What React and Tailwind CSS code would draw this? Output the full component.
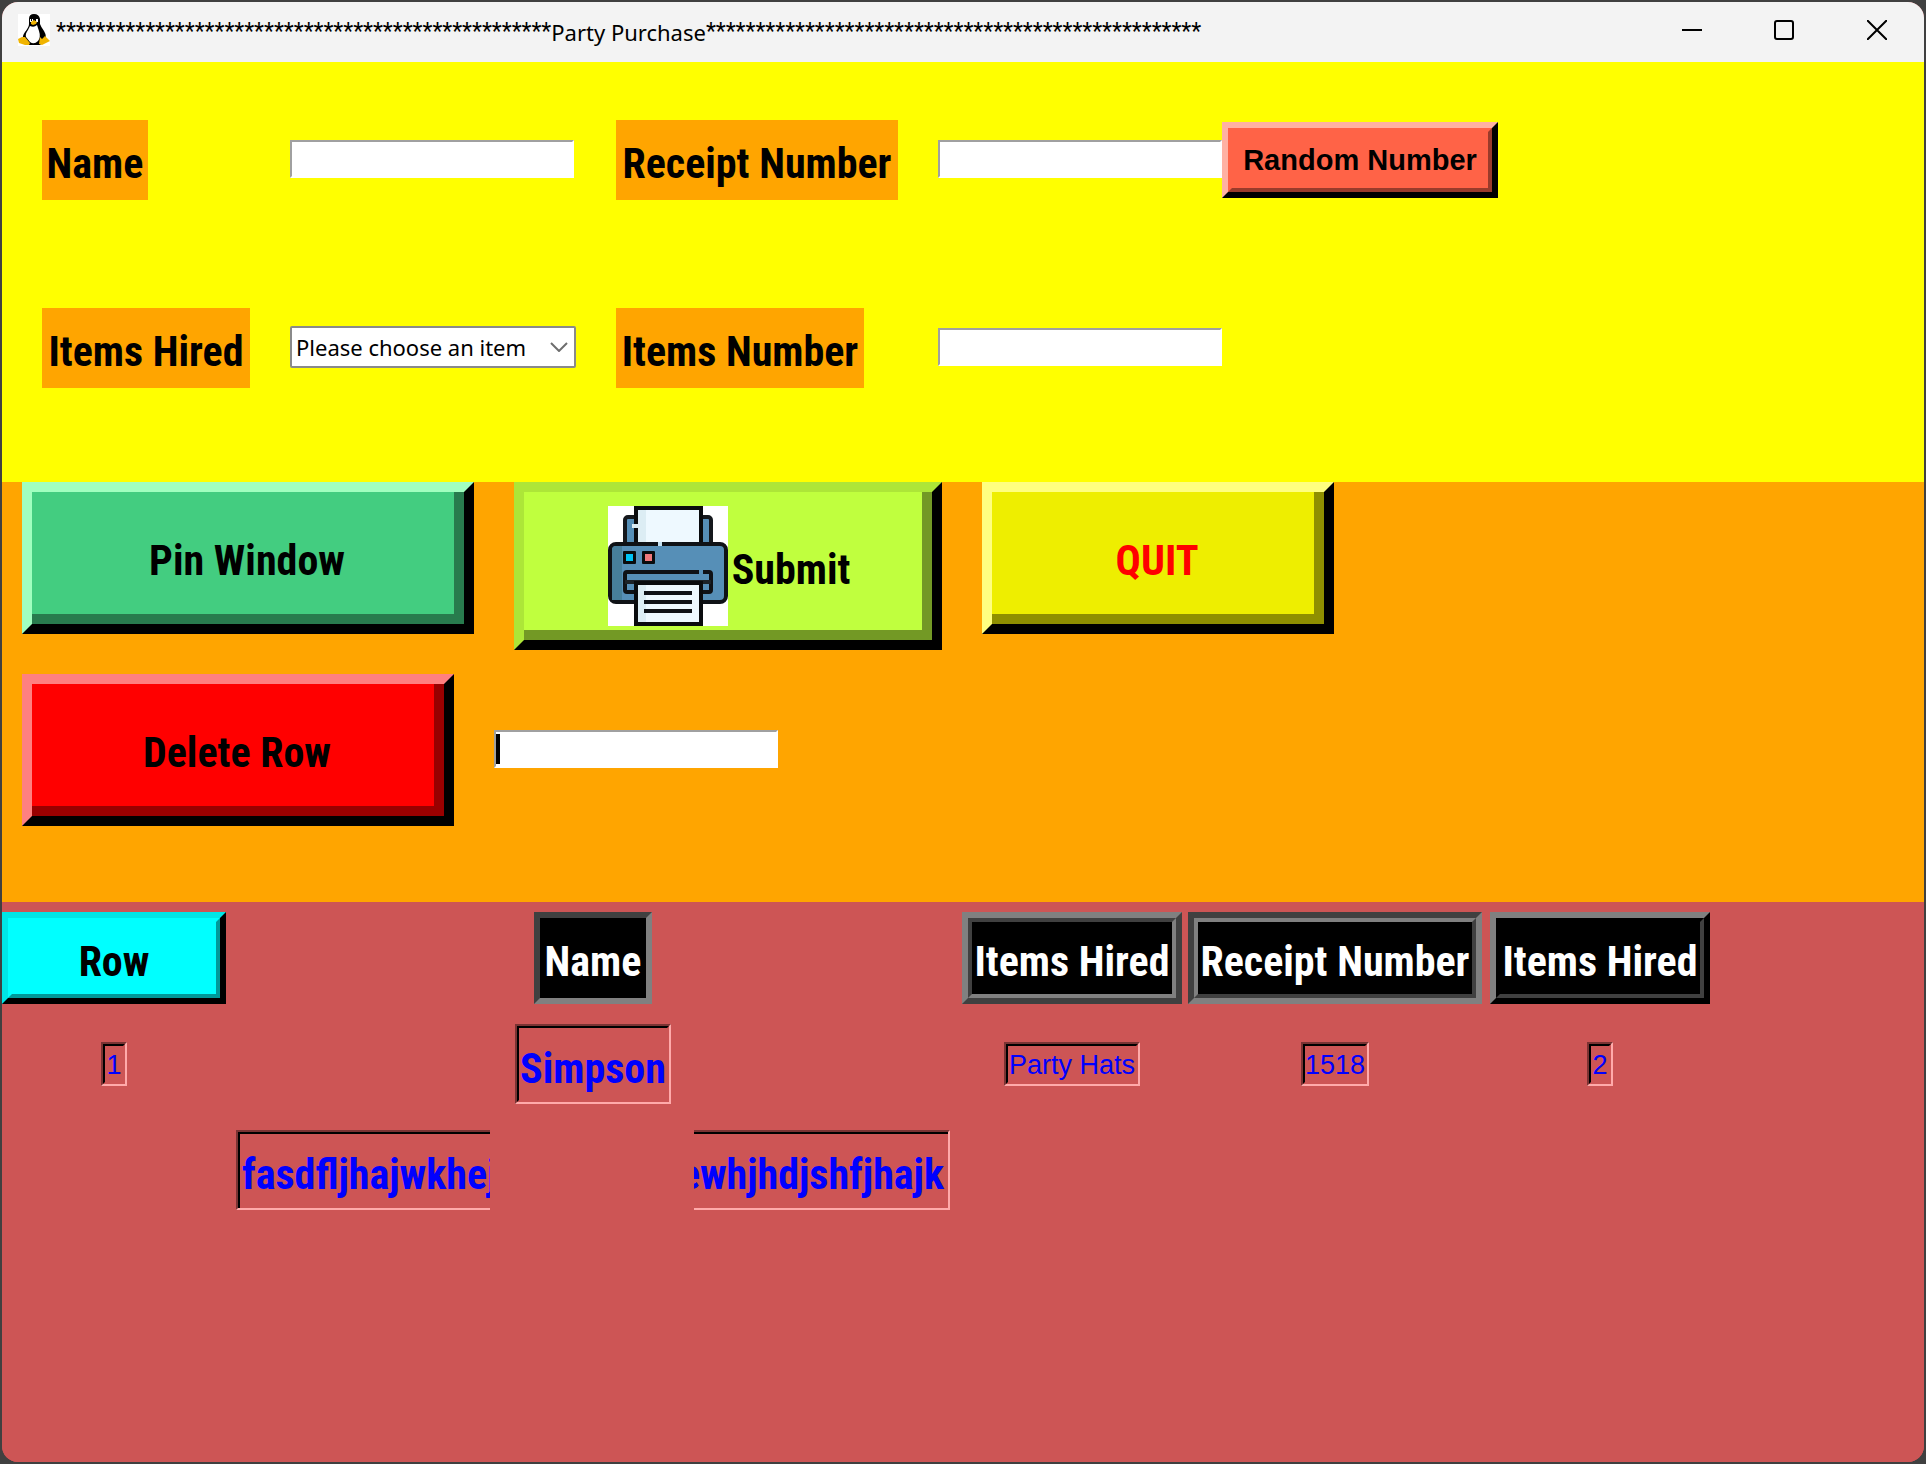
import React from "react";

const DISPLAY = "font-['Roboto_Condensed','Roboto',sans-serif] font-bold";

const STARS = "*".repeat(50);

function Tux() {
  return (
    <svg width="32" height="32" viewBox="0 0 32 32" aria-hidden="true">
      <rect width="32" height="32" fill="#fff" />
      <path d="M11 5Q11 0 16 0Q21 0 22 5V10Q23 13 26 17Q29 22 27 27L22 31H10L5 26Q4 22 7 18Q11 13 11 10Z" fill="#000" />
      <path d="M12 12Q16 14 19 11Q20 14 21 17Q23 23 20 27Q16 31 12 28L8 23Q7 20 10 16Z" fill="#fff" />
      <path d="M12 5h3v3h-3zM17 5h3v3h-3z" fill="#fff" />
      <path d="M13 5h1v2h-1zM17 5h1v2h-1z" fill="#000" />
      <path d="M13 8L16 6L19 8L18 10L15 11L13 10Z" fill="#f0b400" />
      <path d="M0 25L4 23L7 23L12 29L11 31L7 31L1 29Z" fill="#f0b400" />
      <path d="M22 23L24 25L27 22L32 27L28 29L24 31L21 30Z" fill="#f0b400" />
    </svg>
  );
}

function Printer() {
  return (
    <svg width="120" height="120" viewBox="0 0 120 120" className="shrink-0" aria-hidden="true">
      <rect width="120" height="120" fill="#fff" />
      <rect x="17" y="11" width="86" height="34" rx="3" fill="#568fb7" stroke="#15181c" strokeWidth="4" />
      <rect x="28" y="2" width="65" height="40" fill="#eef9ff" stroke="#0a0c0e" strokeWidth="4" />
      <rect x="30" y="4" width="8" height="34" fill="#dcedf4" />
      <rect x="24" y="18" width="7" height="4" fill="#dcedf4" />
      <rect x="2" y="38" width="116" height="58" rx="6" fill="#568fb7" stroke="#0f1216" strokeWidth="4" />
      <path d="M8 40H14V94H4V44Q4 40 8 40Z" fill="#477f9b" />
      <rect x="50" y="36" width="4" height="4" fill="#c6e2f2" />
      <rect x="15" y="45" width="13" height="13" rx="1" fill="#0a0c0e" />
      <rect x="18" y="48" width="7" height="7" fill="#00c3f5" />
      <rect x="34" y="45" width="13" height="13" rx="1" fill="#0a0c0e" />
      <rect x="37" y="48" width="7" height="7" fill="#f0787c" />
      <rect x="17" y="66" width="86" height="20" rx="2" fill="#568fb7" stroke="#0f1216" strokeWidth="4" />
      <rect x="91" y="64" width="4" height="4" fill="#568fb7" />
      <path d="M17 76H103" stroke="#1c2227" strokeWidth="4" />
      <rect x="28" y="77" width="65" height="41" fill="#eef9ff" stroke="#0a0c0e" strokeWidth="4" />
      <rect x="30" y="79" width="8" height="37" fill="#dcedf4" />
      <path d="M36 87H84M36 96H84M36 105H84" stroke="#0f1216" strokeWidth="4" />
    </svg>
  );
}

function FieldLabel({ htmlFor, width, children }) {
  return (
    <label htmlFor={htmlFor} className={`${DISPLAY} ${width} flex h-20 items-center justify-center whitespace-nowrap bg-[#ffa500] pt-2 text-[42px] leading-none text-black`}>
      {children}
    </label>
  );
}

function Entry({ id, ...rest }) {
  return (
    <input
      id={id}
      type="text"
      className="mb-0.5 block h-[38px] w-[284px] border-2 border-t-[#a0a0a0] border-l-[#a0a0a0] border-r-white border-b-white bg-white px-1 font-['Liberation_Sans',sans-serif] text-2xl outline-none"
      {...rest}
    />
  );
}

function BigButton({ outer, inner, children }) {
  return (
    <button type="button" className={`${DISPLAY} ${outer} block border-10 border-r-black border-b-black text-[42px] leading-none`}>
      <span className={`${inner} flex h-full items-center justify-center whitespace-nowrap border-r-10 border-b-10`}>{children}</span>
    </button>
  );
}

function HeadCell({ outer, inner, children }) {
  return (
    <th className="p-0 align-middle font-normal">
      <div className={`${DISPLAY} ${outer} mx-auto h-[92px] border-6 bg-black text-[42px] leading-none text-white`}>
        <div className={`${inner} flex h-full items-center justify-center whitespace-nowrap border-4 pt-2`}>{children}</div>
      </div>
    </th>
  );
}

function Sunken({ size, children }) {
  return (
    <div className={`${size} mx-auto border-2 border-t-[#7b3333] border-l-[#7b3333] border-r-[#ffaaaa] border-b-[#ffaaaa] text-[#0000ff]`}>
      <div className="flex h-full items-center justify-center whitespace-nowrap border-2 border-t-black border-l-black border-r-[#cd5555] border-b-[#cd5555] pt-0.5">
        {children}
      </div>
    </div>
  );
}

const SMALL = "h-11 font-['Liberation_Sans',sans-serif] text-[27px] leading-none";

export default function App() {
  return (
    <div className="min-h-screen bg-[#404040] p-0.5">
      <div className="flex min-h-[calc(100vh-4px)] flex-col overflow-hidden rounded-2xl bg-[#cd5555]">
        <header className="flex h-[60px] shrink-0 items-center justify-between bg-[#f3f3f3] pb-1 text-black">
          <div className="flex items-center pl-4">
            <Tux />
            <h1 className="ml-1.5 flex h-8 items-center whitespace-nowrap pt-1 font-['Noto_Sans',sans-serif] text-[22px] font-normal leading-8">
              <span className="font-['Roboto',sans-serif] text-[23px]">{STARS}</span>
              <span>Party Purchase</span>
              <span className="font-['Roboto',sans-serif] text-[23px]">{STARS}</span>
            </h1>
          </div>
          <div className="flex h-full">
            <button type="button" aria-label="Minimize" className="flex h-full w-[92px] items-center justify-center">
              <svg width="20" height="20" viewBox="0 0 20 20"><path d="M0 10H20" stroke="#000" strokeWidth="2" /></svg>
            </button>
            <button type="button" aria-label="Maximize" className="flex h-full w-[92px] items-center justify-center">
              <svg width="20" height="20" viewBox="0 0 20 20"><rect x="1" y="1" width="18" height="18" rx="2" fill="none" stroke="#000" strokeWidth="2" /></svg>
            </button>
            <button type="button" aria-label="Close" className="flex h-full w-[94px] items-center justify-center">
              <svg width="20" height="20" viewBox="0 0 20 20"><path d="M0 0L20 20M20 0L0 20" stroke="#000" strokeWidth="2" /></svg>
            </button>
          </div>
        </header>

        <section className="h-[420px] shrink-0 bg-[#ffff00] pt-[58px] pl-10">
          <div className="grid grid-cols-[248px_326px_322px_284px_276px] grid-rows-[80px_80px] items-center gap-y-[108px]">
            <FieldLabel htmlFor="name" width="w-[106px]">Name</FieldLabel>
            <Entry id="name" />
            <FieldLabel htmlFor="receipt" width="w-[282px]">Receipt Number</FieldLabel>
            <Entry id="receipt" />
            <button type="button" className="block h-[76px] border-6 border-t-[#ffb1a3] border-l-[#ffb1a3] border-r-black border-b-black font-['Liberation_Sans',sans-serif] text-[29px] font-bold leading-none text-black">
              <span className="flex h-full items-center justify-center whitespace-nowrap border-4 border-t-[#ff6347] border-l-[#ff6347] border-r-[#993b2b] border-b-[#993b2b] bg-[#ff6347]">Random Number</span>
            </button>

            <FieldLabel htmlFor="item" width="w-[208px]">Items Hired</FieldLabel>
            <div className="relative mb-0.5 h-[42px] w-[286px]">
              <select id="item" className="h-full w-full appearance-none rounded-xs border-2 border-[#8a8a8a] bg-white pl-1 font-['Noto_Sans',sans-serif] text-[22px] leading-none text-black outline-none">
                <option>Please choose an item</option>
              </select>
              <svg width="18" height="10" viewBox="0 0 18 10" className="pointer-events-none absolute top-4 right-2" aria-hidden="true">
                <path d="M1 1L9 9L17 1" fill="none" stroke="#6e6e6e" strokeWidth="2" />
              </svg>
            </div>
            <FieldLabel htmlFor="count" width="w-[248px]">Items Number</FieldLabel>
            <Entry id="count" />
          </div>
        </section>

        <section className="h-[420px] shrink-0 bg-[#ffa500] pl-5">
          <div className="flex h-48 items-start gap-10">
            <BigButton outer="h-[152px] w-[452px] border-t-[#a1ffbf] border-l-[#a1ffbf] text-black" inner="border-[#287b4d] bg-[#43cd80] pt-4 pl-2">Pin Window</BigButton>
            <BigButton outer="h-[168px] w-[428px] border-t-[#ade638] border-l-[#ade638] text-black" inner="gap-1 border-[#739925] bg-[#c0ff3e] pt-2.5 pl-3">
              <Printer />
              <span className="pt-2">Submit</span>
            </BigButton>
            <BigButton outer="h-[152px] w-[352px] border-t-[#ffff80] border-l-[#ffff80] text-[#ff0000]" inner="border-[#8f8f00] bg-[#eeee00] pt-4 pl-2">QUIT</BigButton>
          </div>
          <div className="flex items-center gap-10">
            <BigButton outer="h-[152px] w-[432px] border-t-[#ff8080] border-l-[#ff8080] text-black" inner="border-[#990000] bg-[#ff0000] pt-4 pl-2">Delete Row</BigButton>
            <div className="relative">
              <Entry id="delete-row" aria-label="Row to delete" />
              <span className="pointer-events-none absolute top-1 left-0.5 h-[30px] w-1 bg-black" />
            </div>
          </div>
        </section>

        <section className="flex-1 bg-[#cd5555]">
          <table className="w-[1712px] table-fixed border-collapse">
            <colgroup>
              <col className="w-[224px]" />
              <col className="w-[734px]" />
              <col className="w-[224px]" />
              <col className="w-[302px]" />
              <col className="w-[228px]" />
            </colgroup>
            <thead>
              <tr className="h-28">
                <th className="p-0 align-middle font-normal">
                  <button type="button" className={`${DISPLAY} block h-[92px] w-full border-6 border-t-[#00e6e6] border-l-[#00e6e6] border-r-black border-b-black text-[42px] leading-none text-black`}>
                    <span className="flex h-full items-center justify-center border-4 border-t-[#00ffff] border-l-[#00ffff] border-r-[#009999] border-b-[#009999] bg-[#00ffff] pt-2">Row</span>
                  </button>
                </th>
                <HeadCell outer="w-[118px] border-t-[#404040] border-l-[#404040] border-r-[#808080] border-b-[#808080]" inner="border-black">Name</HeadCell>
                <HeadCell outer="w-[220px] border-t-[#808080] border-l-[#808080] border-r-[#404040] border-b-[#404040]" inner="border-t-[#404040] border-l-[#404040] border-r-[#808080] border-b-[#808080]">Items Hired</HeadCell>
                <HeadCell outer="w-[294px] border-t-[#404040] border-l-[#404040] border-r-[#808080] border-b-[#808080]" inner="border-t-[#808080] border-l-[#808080] border-r-[#404040] border-b-[#404040]">Receipt Number</HeadCell>
                <HeadCell outer="w-[220px] border-t-[#808080] border-l-[#808080] border-r-black border-b-black" inner="border-t-black border-l-black border-r-[#404040] border-b-[#404040]">Items Hired</HeadCell>
              </tr>
            </thead>
            <tbody>
              <tr className="h-[100px]">
                <td className="p-0"><Sunken size={`${SMALL} w-[26px]`}>1</Sunken></td>
                <td className="p-0"><Sunken size={`${DISPLAY} h-20 w-[156px] text-[42px] leading-none`}><span className="pt-2">Simpson</span></Sunken></td>
                <td className="p-0"><Sunken size={`${SMALL} w-[136px]`}>Party Hats</Sunken></td>
                <td className="p-0"><Sunken size={`${SMALL} w-[68px]`}>1518</Sunken></td>
                <td className="p-0"><Sunken size={`${SMALL} w-[26px]`}>2</Sunken></td>
              </tr>
              <tr className="h-28">
                <td className="p-0" />
                <td className="p-0">
                  <div className={`${DISPLAY} mx-auto flex h-20 w-[714px] justify-between text-[42px] leading-none text-[#0000ff]`}>
                    <div className="w-[254px] border-2 border-r-0 border-t-[#7b3333] border-l-[#7b3333] border-b-[#ffaaaa]">
                      <div className="flex h-full items-center overflow-hidden whitespace-nowrap border-t-2 border-l-2 border-black pt-2 pl-0.5">fasdfljhajwkhej</div>
                    </div>
                    <div className="w-[256px] border-2 border-l-0 border-t-[#7b3333] border-r-[#ffaaaa] border-b-[#ffaaaa]">
                      <div className="flex h-full items-center justify-end overflow-hidden whitespace-nowrap border-t-2 border-black pt-2 pr-1">ewhjhdjshfjhajk</div>
                    </div>
                  </div>
                </td>
                <td className="p-0" />
                <td className="p-0" />
                <td className="p-0" />
              </tr>
            </tbody>
          </table>
        </section>
      </div>
    </div>
  );
}
